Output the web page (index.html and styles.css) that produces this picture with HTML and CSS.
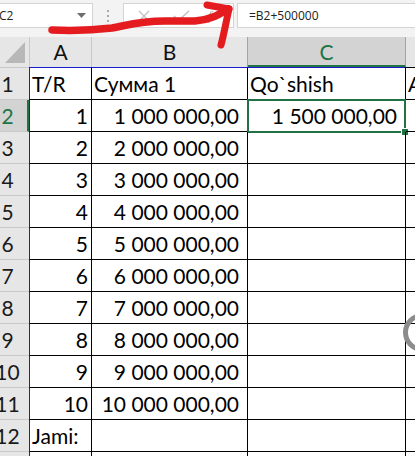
FILE: index.html
```html
<!DOCTYPE html>
<html>
<head>
<meta charset="utf-8">
<link rel="stylesheet" href="styles.css">
</head>
<body>
<div class="toolbar">
  <div class="namebox"><span class="nb-text">C2</span>
    <svg class="nb-arrow" width="9" height="6" viewBox="0 0 9 6"><polygon points="0,0 9,0 4.5,5" fill="#6f6f6f"/></svg>
  </div>
  <div class="dots">
    <svg width="4" height="14" viewBox="0 0 4 14"><rect x="1" y="1" width="2" height="2" fill="#aaa"/><rect x="1" y="6" width="2" height="2" fill="#aaa"/><rect x="1" y="11" width="2" height="2" fill="#aaa"/></svg>
  </div>
  <div class="fxbox">
    <svg class="btn-x" width="12" height="12" viewBox="0 0 12 12"><path d="M1 1 L11 11 M11 1 L1 11" stroke="#c2c2c2" stroke-width="1.4" fill="none"/></svg>
    <svg class="btn-ok" width="17" height="12" viewBox="0 0 17 12"><path d="M1 6 L5.5 10.5 L16 1" stroke="#c2c2c2" stroke-width="1.6" fill="none"/></svg>
    <span class="fx">fx</span>
  </div>
  <div class="formula">=B2+500000</div>
</div>

<div class="sheet">
  <div class="corner"><svg width="29" height="30" viewBox="0 0 29 30"><polygon points="25,5 25,26 5,26" fill="#b8b8b8"/></svg></div>
  <div class="ch cha">A</div>
  <div class="ch chb">B</div>
  <div class="ch chc">C</div>
  <div class="ch chd"></div>

  <div class="rh r1">1</div>
  <div class="c ca r1">T/R</div>
  <div class="c cb r1">Сумма 1</div>
  <div class="c cc r1">Qo`shish</div>
  <div class="c cd r1 r1d">A</div>

  <div class="rh sel">2</div>
  <div class="c ca num">1</div>
  <div class="c cb num">1 000 000,00</div>
  <div class="c cc num active">1 500 000,00<div class="selbox"><div class="handle"></div></div></div>
  <div class="c cd"></div>

  <div class="rh">3</div><div class="c ca num">2</div><div class="c cb num">2 000 000,00</div><div class="c cc"></div><div class="c cd"></div>
  <div class="rh">4</div><div class="c ca num">3</div><div class="c cb num">3 000 000,00</div><div class="c cc"></div><div class="c cd"></div>
  <div class="rh">5</div><div class="c ca num">4</div><div class="c cb num">4 000 000,00</div><div class="c cc"></div><div class="c cd"></div>
  <div class="rh">6</div><div class="c ca num">5</div><div class="c cb num">5 000 000,00</div><div class="c cc"></div><div class="c cd"></div>
  <div class="rh">7</div><div class="c ca num">6</div><div class="c cb num">6 000 000,00</div><div class="c cc"></div><div class="c cd"></div>
  <div class="rh">8</div><div class="c ca num">7</div><div class="c cb num">7 000 000,00</div><div class="c cc"></div><div class="c cd"></div>
  <div class="rh">9</div><div class="c ca num">8</div><div class="c cb num">8 000 000,00</div><div class="c cc"></div><div class="c cd"></div>
  <div class="rh">10</div><div class="c ca num">9</div><div class="c cb num">9 000 000,00</div><div class="c cc"></div><div class="c cd"></div>
  <div class="rh">11</div><div class="c ca num">10</div><div class="c cb num">10 000 000,00</div><div class="c cc"></div><div class="c cd"></div>
  <div class="rh">12</div><div class="c ca">Jami:</div><div class="c cb"></div><div class="c cc"></div><div class="c cd"></div>
  <div class="rh">13</div><div class="c ca"></div><div class="c cb"></div><div class="c cc"></div><div class="c cd"></div>
</div>

<svg class="annot" width="415" height="60" viewBox="0 0 415 60">
  <path d="M52 30 C 75 31 95 30 112 28 C 128 25 140 21 165 21 L 195 21 C 210 20 218 15 228 9" stroke="#e41b1f" stroke-width="7.5" fill="none" stroke-linecap="round" stroke-linejoin="round"/>
  <path d="M207 5 L 229 9" stroke="#e41b1f" stroke-width="7" fill="none" stroke-linecap="round"/>
  <path d="M229 9 C 226 22 224 34 221 45" stroke="#e41b1f" stroke-width="7" fill="none" stroke-linecap="round"/>
</svg>

<svg class="ring" width="15" height="45" viewBox="0 0 15 45">
  <circle cx="22.5" cy="22.5" r="17" stroke="#8c8c8c" stroke-width="5" fill="none"/>
</svg>
</body>
</html>
```

FILE: styles.css
```css
html, body {
  margin: 0;
  padding: 0;
}
body {
  width: 415px;
  height: 456px;
  overflow: hidden;
  position: relative;
  background: #fff;
  font-family: Lato, "Open Sans", "Noto Sans", sans-serif;
  color: #000;
}

/* ---------- formula toolbar ---------- */
.toolbar {
  height: 37px;
  box-sizing: border-box;
  padding-top: 3px;
  background: #f3f3f3;
  display: flex;
  align-items: flex-start;
}
.namebox {
  width: 93px;
  height: 25px;
  box-sizing: border-box;
  background: #fff;
  border: 1px solid #d4d4d4;
  border-left: none;
  display: flex;
  align-items: center;
  justify-content: space-between;
  padding-right: 6px;
  font-family: "Open Sans", sans-serif;
  font-size: 12px;
  color: #222;
}
.nb-text {
  margin-left: -1px;
}
.nb-arrow {
  margin-top: 1px;
}
.dots {
  width: 30px;
  height: 25px;
  display: flex;
  align-items: center;
  justify-content: center;
}
.fxbox {
  width: 111px;
  height: 25px;
  box-sizing: border-box;
  background: #fff;
  border: 1px solid #d4d4d4;
  display: flex;
  align-items: center;
  padding-left: 14px;
}
.btn-ok {
  margin-left: 23px;
}
.fx {
  margin-left: 18px;
  font-family: "Liberation Serif", serif;
  font-style: italic;
  font-size: 13px;
  color: #9a9a9a;
}
.formula {
  flex: 1;
  margin-left: 3px;
  height: 25px;
  box-sizing: border-box;
  background: #fff;
  border: 1px solid #d4d4d4;
  border-right: none;
  padding-left: 11px;
  display: flex;
  align-items: center;
  font-family: "Open Sans", sans-serif;
  font-size: 12px;
  color: #222;
}

/* ---------- sheet grid ---------- */
.sheet {
  display: grid;
  grid-template-columns: 29px 63px 156px 158px 1fr;
  grid-template-rows: 30px 33px repeat(12, 32px);
  font-size: 21px;
}
.corner {
  background: #e6e6e6;
  height: 30px;
}
.corner svg {
  display: block;
}
.ch {
  background: #e6e6e6;
  box-sizing: border-box;
  border-right: 1px solid #c9c9c9;
  text-align: center;
  padding-top: 1px;
  line-height: 28px;
  color: #111;
}
.cha {
  border-left: 1px solid #c9c9c9;
}
.chb {
  border-right-color: #a3a3a3;
}
.chc {
  background: #d3d3d3;
  color: #217346;
  border-right-color: #a3a3a3;
  border-bottom: 2px solid #217346;
}
.chd {
  border-right: none;
}

.rh {
  background: #e6e6e6;
  box-sizing: border-box;
  border-bottom: 1px solid #c9c9c9;
  display: flex;
  justify-content: center;
  padding-right: 14px;
  padding-top: 1px;
  line-height: 29px;
  color: #1a1a1a;
  white-space: nowrap;
}
.rh.r1 {
  border-top: 1px solid #c9c9c9;
}
.rh.sel {
  background: #d3d3d3;
  color: #217346;
  border-right: 2px solid #217346;
  padding-right: 12px;
}

.c {
  box-sizing: border-box;
  border-right: 1px solid #000;
  border-bottom: 1px solid #000;
  padding: 1px 2px 0 2px;
  line-height: 29px;
  white-space: nowrap;
  position: relative;
}
.c.r1 {
  border-top: 1px solid #1a1ad2;
}
.c.r1d {
  border-top-color: #000;
}
.ca {
  border-left: 1px solid #1a1ad2;
  overflow: hidden;
}
.cb {
  overflow: hidden;
}
.cd {
  border-right: none;
  overflow: hidden;
}
.num {
  text-align: right;
}
.ca.num {
  padding-right: 3px;
}
.cb.num,
.cc.num {
  padding-right: 8px;
}

/* active cell selection */
.selbox {
  position: absolute;
  left: -1px;
  top: -1px;
  width: 159px;
  height: 34px;
  box-sizing: border-box;
  border: 2px solid #217346;
}
.handle {
  position: absolute;
  right: -5px;
  bottom: -5px;
  width: 6px;
  height: 6px;
  background: #217346;
  border: 1px solid #fff;
}

/* overlays */
.annot {
  position: absolute;
  left: 0;
  top: 0;
  pointer-events: none;
}
.ring {
  position: absolute;
  left: 400px;
  top: 310px;
}
```
